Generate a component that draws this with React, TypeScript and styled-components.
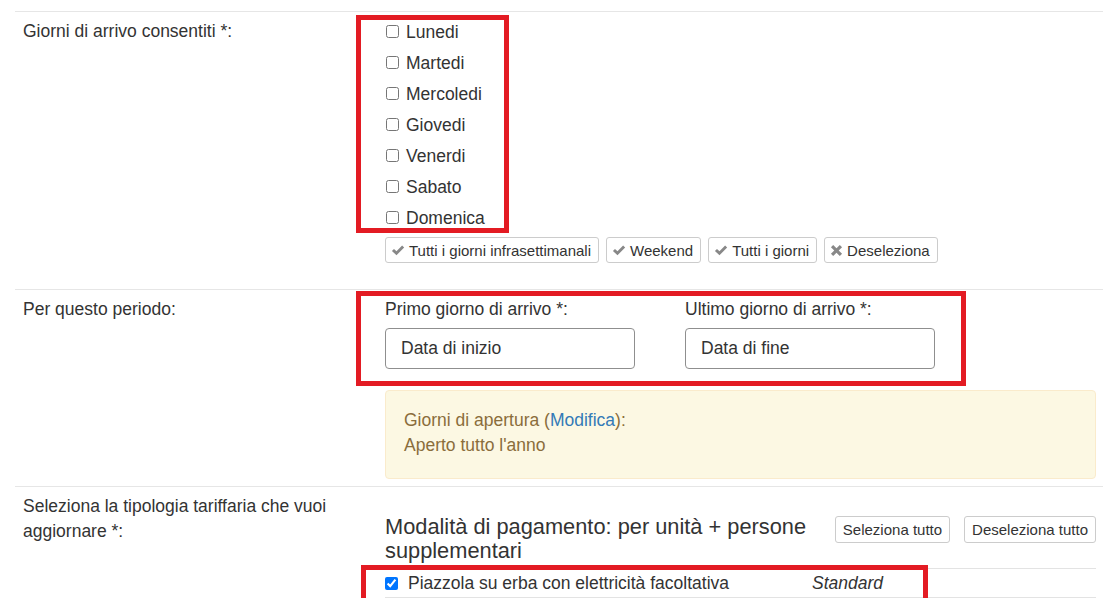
import React from 'react';
import styled, { createGlobalStyle } from 'styled-components';

const GlobalStyle = createGlobalStyle`
  body {
    margin: 0;
    background: #fff;
    font-family: 'Liberation Sans', Arial, sans-serif;
    font-size: 17.5px;
    color: #333;
  }
`;

const days = ['Lunedi', 'Martedi', 'Mercoledi', 'Giovedi', 'Venerdi', 'Sabato', 'Domenica'];

const CheckIcon = () => (
  <svg width="14" height="13" viewBox="0 0 12 12">
    <path d="M0.4 6.5 L2.3 4.6 L4.6 6.8 L9.8 1.4 L11.7 3.3 L4.6 10.3 Z" fill="#888" />
  </svg>
);

const RemoveIcon = () => (
  <svg width="13" height="13" viewBox="0 0 11 11">
    <path
      d="M0.8 2.7 L2.7 0.8 L5.5 3.6 L8.3 0.8 L10.2 2.7 L7.4 5.5 L10.2 8.3 L8.3 10.2 L5.5 7.4 L2.7 10.2 L0.8 8.3 L3.6 5.5 Z"
      fill="#888"
    />
  </svg>
);

const App: React.FC = () => {
  return (
    <Page>
      <GlobalStyle />
      <FormRow $bottom={26}>
        <RowLabel>Giorni di arrivo consentiti *:</RowLabel>
        <RowControl $top={4}>
          <DayList>
            <Highlight $top={-1} $left={-29} $width={153} $height={218} />
            {days.map((day) => (
              <DayOption key={day}>
                <input type="checkbox" />
                {day}
              </DayOption>
            ))}
          </DayList>
          <QuickButtons>
            <SmallButton>
              <CheckIcon />
              Tutti i giorni infrasettimanali
            </SmallButton>
            <SmallButton>
              <CheckIcon />
              Weekend
            </SmallButton>
            <SmallButton>
              <CheckIcon />
              Tutti i giorni
            </SmallButton>
            <SmallButton>
              <RemoveIcon />
              Deseleziona
            </SmallButton>
          </QuickButtons>
        </RowControl>
      </FormRow>

      <FormRow $bottom={7}>
        <RowLabel>Per questo periodo:</RowLabel>
        <RowControl $top={7}>
          <DateGroup>
            <Highlight $top={-6} $left={-29} $width={610} $height={95} />
            <DateField>
              <FieldLabel>Primo giorno di arrivo *:</FieldLabel>
              <DateInput>Data di inizio</DateInput>
            </DateField>
            <DateField>
              <FieldLabel>Ultimo giorno di arrivo *:</FieldLabel>
              <DateInput>Data di fine</DateInput>
            </DateField>
          </DateGroup>
          <WarningBox>
            <div>
              Giorni di apertura (<InfoLink href="#">Modifica</InfoLink>):
            </div>
            <div>Aperto tutto l'anno</div>
          </WarningBox>
        </RowControl>
      </FormRow>

      <FormRow $bottom={0}>
        <RowLabel>Seleziona la tipologia tariffaria che vuoi aggiornare *:</RowLabel>
        <RowControl $top={7}>
          <RateHeader>
            <RateTitle>Modalità di pagamento: per unità + persone supplementari</RateTitle>
            <HeaderButton>Seleziona tutto</HeaderButton>
            <HeaderButton>Deseleziona tutto</HeaderButton>
          </RateHeader>
          <RateRow>
            <Highlight $top={-4} $left={-24} $width={567} $height={38} />
            <RateName>
              <input type="checkbox" defaultChecked />
              Piazzola su erba con elettricità facoltativa
            </RateName>
            <RateType>Standard</RateType>
          </RateRow>
        </RowControl>
      </FormRow>
    </Page>
  );
};

export default App;

const Page = styled.div`
  padding: 11px 15px 0;
`;

const FormRow = styled.div<{ $bottom: number }>`
  display: grid;
  grid-template-columns: 355px 1fr;
  border-top: 1px solid #e6e6e6;
  padding-bottom: ${(p) => p.$bottom}px;
`;

const RowLabel = styled.div`
  padding: 7px 8px 0;
  line-height: 25px;
`;

const RowControl = styled.div<{ $top: number }>`
  padding: ${(p) => p.$top}px 7px 0 15px;
  min-width: 0;
`;

const Highlight = styled.div<{ $top: number; $left: number; $width: number; $height: number }>`
  position: absolute;
  top: ${(p) => p.$top}px;
  left: ${(p) => p.$left}px;
  width: ${(p) => p.$width}px;
  height: ${(p) => p.$height}px;
  box-sizing: border-box;
  border: 5px solid #e31b23;
  pointer-events: none;
  z-index: 2;
`;

const DayList = styled.div`
  position: relative;
`;

const DayOption = styled.label`
  display: flex;
  align-items: center;
  height: 31px;
  line-height: 20px;

  input {
    width: 13px;
    height: 13px;
    margin: 0 7px 0 1px;
  }
`;

const QuickButtons = styled.div`
  display: flex;
  gap: 7px;
  margin-top: 4px;
`;

const SmallButton = styled.button`
  display: inline-flex;
  align-items: center;
  gap: 4px;
  height: 26px;
  padding: 0 7px 0 5px;
  border: 1px solid #ccc;
  border-radius: 3px;
  background: #fff;
  color: #333;
  font-family: inherit;
  font-size: 15px;
  cursor: pointer;
`;

const DateGroup = styled.div`
  position: relative;
  display: grid;
  grid-template-columns: 300px 300px;
`;

const DateField = styled.div`
  display: flex;
  flex-direction: column;
`;

const FieldLabel = styled.div`
  line-height: 24px;
`;

const DateInput = styled.div`
  box-sizing: border-box;
  width: 250px;
  height: 41px;
  margin-top: 7px;
  padding: 0 15px;
  border: 1px solid #8f8f8f;
  border-radius: 4px;
  display: flex;
  align-items: center;
  color: #333;
`;

const WarningBox = styled.div`
  margin-top: 21px;
  padding: 17px 18px 20px;
  border: 1px solid #faebcc;
  border-radius: 4px;
  background: #fcf8e3;
  color: #8a6d3b;
  line-height: 25px;
`;

const InfoLink = styled.a`
  color: #337ab7;
  text-decoration: none;
`;

const RateHeader = styled.div`
  display: flex;
  align-items: flex-start;
  margin-top: 21px;
`;

const RateTitle = styled.h3`
  flex: 1;
  min-width: 0;
  margin: 0;
  font-size: 21.8px;
  font-weight: normal;
  line-height: 24px;
`;

const HeaderButton = styled.button`
  flex-shrink: 0;
  height: 27px;
  margin: 1px 0 0 14px;
  padding: 0 7px;
  border: 1px solid #ccc;
  border-radius: 3px;
  background: #fff;
  color: #333;
  font-family: inherit;
  font-size: 15px;
  white-space: nowrap;
  cursor: pointer;
`;

const RateRow = styled.div`
  position: relative;
  display: flex;
  align-items: center;
  height: 28px;
  margin-top: 5px;
  border-top: 1px solid #e3e3e3;
  border-bottom: 1px solid #e3e3e3;
`;

const RateName = styled.label`
  display: flex;
  align-items: center;
  width: 427px;

  input {
    width: 13px;
    height: 13px;
    margin: 0 10px 0 0;
  }
`;

const RateType = styled.span`
  font-style: italic;
`;
